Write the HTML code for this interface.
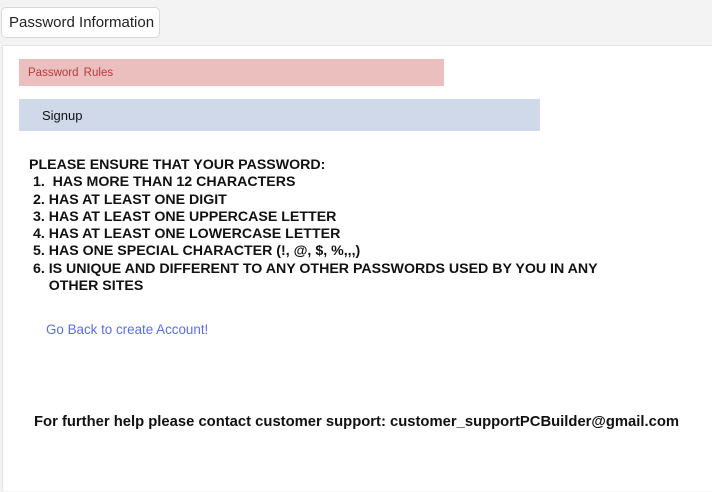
<!DOCTYPE html>
<html><head><style>
body{margin:0;width:712px;height:492px;background:#f3f3f3;font-family:"Liberation Sans",sans-serif;position:relative;overflow:hidden}
.tab{position:absolute;left:1px;top:7px;width:159px;height:31px;background:#fff;border:1px solid #d8d8d8;border-radius:5px;box-sizing:border-box;font-size:15px;color:#222;line-height:30px;padding-left:7px}
.panel{position:absolute;left:2px;top:45px;width:712px;height:445px;background:#fff;border-top:1px solid #e2e2e2;border-left:1px solid #e2e2e2}
.rules{position:absolute;left:19px;top:59px;width:425px;height:27px;background:#ecbfbf;color:#b83a3a;font-size:11.5px;line-height:29px;padding-left:9px;box-sizing:border-box;word-spacing:2px}
.signup{position:absolute;left:19px;top:99px;width:521px;height:32px;background:#d0d9ea;color:#111;font-size:13px;line-height:33px;padding-left:23px;box-sizing:border-box}
.list{position:absolute;left:29px;top:157px;font-weight:bold;font-size:14.2px;line-height:17.3px;color:#111;white-space:pre}
.link{position:absolute;left:46px;top:322px;color:#5b6fe0;font-size:13.4px}
.help{position:absolute;left:34px;top:414px;font-weight:bold;font-size:14.8px;color:#111}
</style></head><body>
<div class="tab">Password Information</div>
<div class="panel"></div>
<div class="rules">Password Rules</div>
<div class="signup">Signup</div>
<div class="list">PLEASE ENSURE THAT YOUR PASSWORD:
 1.  HAS MORE THAN 12 CHARACTERS
 2. HAS AT LEAST ONE DIGIT
 3. HAS AT LEAST ONE UPPERCASE LETTER
 4. HAS AT LEAST ONE LOWERCASE LETTER
 5. HAS ONE SPECIAL CHARACTER (!, @, $, %,,,)
 6. IS UNIQUE AND DIFFERENT TO ANY OTHER PASSWORDS USED BY YOU IN ANY
     OTHER SITES</div>
<div class="link">Go Back to create Account!</div>
<div class="help">For further help please contact customer support: customer_supportPCBuilder@gmail.com</div>
</body></html>
